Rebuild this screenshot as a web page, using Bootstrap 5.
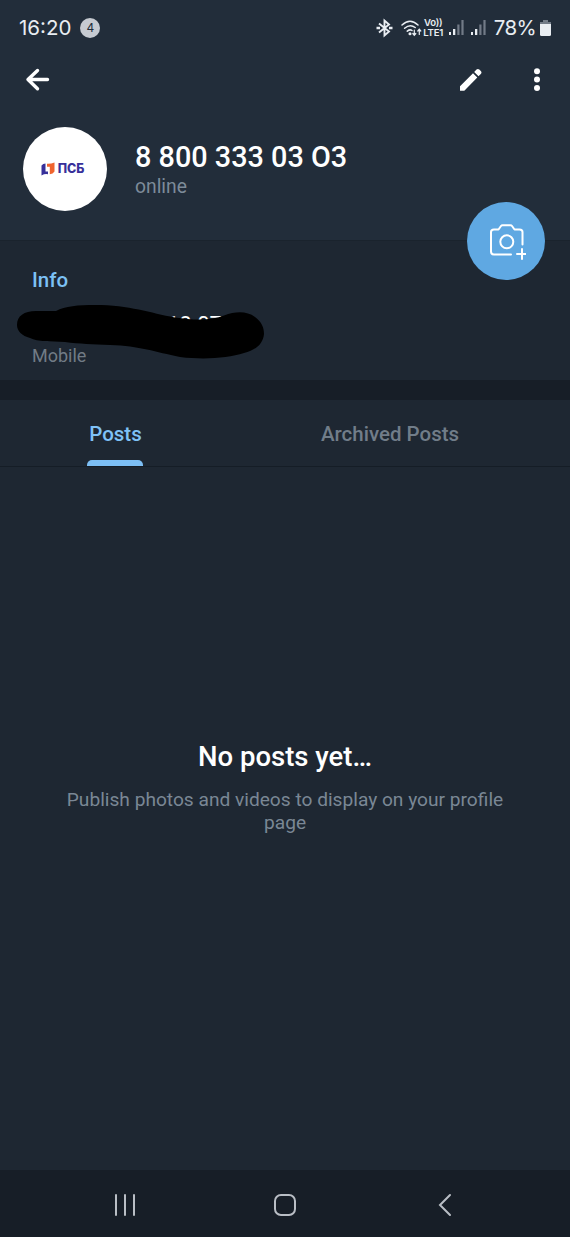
<!DOCTYPE html>
<html lang="en">
<head>
  <meta charset="UTF-8" />
  <meta name="viewport" content="width=device-width, initial-scale=1.0"/>
  <title>Profile</title>
  <link href="https://cdn.jsdelivr.net/npm/bootstrap@5.3.3/dist/css/bootstrap.min.css" rel="stylesheet"/>
  <style>
    body {
      background-color: #1e2732;
      color: #fff;
      font-family: Roboto, sans-serif;
      height: 1237px;
      overflow: hidden;
    }

    svg {
      display: block;
      flex-shrink: 0;
    }

    .profile-header {
      background-color: #222d3a;
      height: 240px;
    }

    /* phone status bar */
    .status-bar {
      height: 54px;
      padding: 1px 19px 0 19px;
      font-family: Inter, sans-serif;
      color: #e9edf2;
    }

    .clock {
      font-size: 20.5px;
      line-height: 24px;
      padding-top: 1px;
    }

    .notif-count {
      width: 20px;
      height: 20px;
      margin-left: 9px;
      font-size: 12px;
      background-color: #c6cad1;
      color: #222d3a;
    }

    .volte {
      font-size: 9.6px;
      font-weight: 600;
      line-height: 10px;
      letter-spacing: -0.2px;
      width: 21px;
      margin-left: 1px;
    }

    .battery-text {
      margin-left: 7px;
      font-size: 20.5px;
      line-height: 24px;
      letter-spacing: -0.6px;
      padding-top: 1px;
    }

    .battery-icon {
      margin-left: 4px;
    }

    .toolbar-row {
      height: 52px;
      padding: 0 29px 0 25px;
    }

    .menu-dots {
      margin-left: 51px;
    }

    .profile-row {
      padding: 21px 0 0 23px;
    }

    .avatar {
      width: 84px;
      height: 84px;
      padding-right: 5px;
      background-color: #fff;
    }

    .avatar-text {
      margin-left: 3px;
      font-family: Inter, sans-serif;
      font-size: 12.5px;
      font-weight: 800;
      color: #37309a;
    }

    .profile-text {
      padding: 14px 0 0 28px;
    }

    .profile-name {
      font-size: 28.8px;
      font-weight: 500;
      line-height: 32px;
    }

    .profile-status {
      margin-top: 2px;
      font-size: 19.3px;
      line-height: 24px;
      color: #7d8b99;
    }

    .photo-btn,
    .photo-btn:hover {
      top: 202px;
      right: 25px;
      width: 78px;
      height: 78px;
      background-color: #5fa8e2;
    }

    .info-section {
      height: 140px;
      padding: 27px 32px 0;
      border-top: 1px solid #1a232d;
    }

    .info-title {
      font-size: 20.5px;
      font-weight: 500;
      line-height: 24px;
      color: #7cc1f5;
    }

    .phone-number {
      margin-top: 18px;
      font-size: 22px;
      line-height: 30px;
      padding-left: 135px;
    }

    .phone-label {
      margin-top: 5px;
      font-size: 18px;
      line-height: 22px;
      color: #717b85;
    }

    /* marker stroke hiding the number */
    .scribble {
      left: 10px;
      top: 300px;
    }

    .divider {
      height: 20px;
      background-color: #171e27;
    }

    .post-tabs {
      height: 67px;
      border-bottom: 1px solid #151d26;
      font-size: 20.5px;
      font-weight: 500;
    }

    .post-tabs .nav-link {
      padding: 0;
      height: 66px;
      line-height: 68px;
      text-align: center;
      color: #717d89;
    }

    .post-tabs .nav-link.active {
      color: #7fc2f7;
    }

    .tab-posts {
      width: 231px;
    }

    .tab-archived {
      width: 318px;
    }

    .tab-line {
      width: 56px;
      height: 6px;
      left: 87px;
      bottom: 0;
      border-radius: 5px 5px 0 0;
      background-color: #7dbff5;
    }

    .empty-state {
      height: 703px;
      padding: 273px 60px 0;
    }

    .empty-title {
      font-size: 27.5px;
      font-weight: 500;
      line-height: 34px;
    }

    .empty-text {
      margin-top: 14px;
      font-size: 19.15px;
      line-height: 23px;
      color: #7a8795;
    }

    .nav-buttons {
      height: 67px;
      padding: 3px 117px 0 113px;
      background-color: #171e27;
    }

    .home-icon {
      margin-right: 5px;
    }
  </style>
</head>
<body>
  <header class="profile-header">
    <div class="status-bar d-flex align-items-center">
      <span class="clock">16:20</span>
      <span class="notif-count rounded-circle d-flex align-items-center justify-content-center">4</span>
      <div class="d-flex align-items-center ms-auto">
        <!-- bluetooth -->
        <svg width="17" height="20" viewBox="0 0 17 20" fill="none" stroke="#e9edf2" stroke-width="1.9">
          <path d="M3 5.500L13 13.500L8.500 17.500V2.500L13 6.500L3 14.500"/>
          <path d="M.5 10h3.500M13 10h3.500" stroke-width="2.400"/>
        </svg>
        <!-- wifi with traffic arrows -->
        <svg class="ms-2" width="21" height="20" viewBox="0 0 21 20" fill="none" stroke="#e9edf2" stroke-width="1.500" stroke-linecap="round">
          <path d="M1 7Q9 -.5 17 7M3.600 10.300Q9 5.500 14.200 9.500M6.300 13.200Q9 11 11 12.500"/>
          <circle cx="9" cy="15.800" r=".8" fill="#e9edf2"/>
          <path d="M13.300 12v5M11.800 15.500l1.500 1.800 1.500-1.800M18.300 16.500v-5M16.800 13l1.500-1.800 1.500 1.800" stroke-width="1.200"/>
        </svg>
        <div class="volte text-center"><div>Vo))</div><div>LTE1</div></div>
        <!-- two sim signals -->
        <svg class="ms-1" width="39" height="20" viewBox="0 0 39 20">
          <path fill="#e9edf2" d="M1 14h2v3H1zM5 11h2.300v6H5zM23 14h2v3h-2zM27 11h2.300v6H27z"/>
          <path fill="#727b87" d="M9.300 6.500h2.200V17H9.300zM13.400 2h2.200v15h-2.200zM31.300 6.500h2.200V17h-2.200zM35.400 2h2.200v15h-2.200z"/>
        </svg>
        <span class="battery-text">78%</span>
        <svg class="battery-icon" width="11" height="18" viewBox="0 0 11 18">
          <path fill="#727b87" d="M3 1h5v2h3v3H0V3h3z"/>
          <path fill="#e9edf2" d="M0 5h11v10.500a1.500 1.500 0 0 1-1.500 1.500h-8A1.500 1.500 0 0 1 0 15.500z"/>
        </svg>
      </div>
    </div>

    <div class="toolbar-row d-flex align-items-center">
      <svg width="25" height="24" viewBox="0 0 25 24" fill="none" stroke="#fff" stroke-width="3.400" stroke-linecap="round" stroke-linejoin="round">
        <path d="M22.500 11.500H3M12.500 2.500L3 11.500l9.500 9.200"/>
      </svg>
      <svg class="ms-auto" width="22" height="24" viewBox="0 0 22 24" fill="#fff">
        <path d="M0 18.200L13 5.200l4.300 4.300L4.300 22.700H0zM14.200 3.900l2.300-2.300a2 2 0 0 1 2.800 0l1.500 1.500a2 2 0 0 1 0 2.800l-2.300 2.300z"/>
      </svg>
      <svg class="menu-dots" width="8" height="24" viewBox="0 0 8 24" fill="#fff">
        <circle cx="4" cy="3.300" r="3"/><circle cx="4" cy="11.600" r="3"/><circle cx="4" cy="20" r="3"/>
      </svg>
    </div>

    <div class="profile-row d-flex">
      <div class="avatar rounded-circle d-flex align-items-center justify-content-center">
        <svg width="14" height="14" viewBox="0 0 14 14">
          <path fill="#37309a" d="M.5 3.500Q2 1.500 4.500 1.500V9.500L7 9.500V12.300Q4 11.500.5 13.500z"/>
          <path fill="#f0642d" d="M6 1.800Q10 2 13.500.5V9.500Q12 12 8.800 12.300V4.800H6z"/>
        </svg>
        <span class="avatar-text">ПСБ</span>
      </div>
      <div class="profile-text">
        <div class="profile-name">8 800 333 03 O3</div>
        <div class="profile-status">online</div>
      </div>
    </div>
  </header>

  <button class="photo-btn btn border-0 rounded-circle position-absolute d-flex align-items-center justify-content-center p-0" aria-label="Set photo">
    <svg width="40" height="38" viewBox="0 0 40 38" fill="none" stroke="#fff" stroke-width="2" stroke-linecap="round" stroke-linejoin="round">
      <path d="M25 32.500H8q-3 0-3-3V10q0-2.500 3-2.500h4.500L15 4q.6-.8 1.500-.8h8q.9 0 1.500.8l2.500 3.500H33.500q3 0 3 2.500V22.500"/>
      <circle cx="20.800" cy="19.800" r="6.500"/>
      <path d="M36 27v10M31 32h9.500"/>
    </svg>
  </button>

  <section class="info-section">
    <div class="info-title">Info</div>
    <div class="phone-number">18 07</div>
    <div class="phone-label">Mobile</div>
  </section>
  <svg class="scribble position-absolute" width="260" height="64" viewBox="10 300 260 64">
    <path d="M17 325C17 316 24 311 36 311H56C65 306 78 305 95 305C130 305 150 313 175 317.500C195 320.500 212 320.500 224 315.500C236 311 247 311 255 317C262 322 264 328 264 334C263 344 256 350 244 353C228 358 205 360 180 357C155 352 140 346 110 345C92 344 80 344 65 342C50 341 38 342 30 338C22 336 17 331 17 325Z"/>
  </svg>

  <div class="divider"></div>

  <nav class="post-tabs nav flex-nowrap position-relative">
    <a class="nav-link active tab-posts" href="#">Posts</a>
    <a class="nav-link tab-archived" href="#">Archived Posts</a>
    <span class="tab-line position-absolute"></span>
  </nav>

  <main class="empty-state text-center">
    <div class="empty-title">No posts yet…</div>
    <div class="empty-text">Publish photos and videos to display on your profile page</div>
  </main>

  <!-- system navigation -->
  <footer class="nav-buttons d-flex align-items-center justify-content-between">
    <svg width="24" height="24" viewBox="0 0 24 24" stroke="#b9bec5" stroke-width="2" stroke-linecap="round">
      <path d="M3 2v20M12 2v20M21 2v20"/>
    </svg>
    <svg class="home-icon" width="24" height="24" viewBox="0 0 24 24" fill="none" stroke="#b9bec5" stroke-width="2">
      <rect x="2" y="2" width="20" height="20" rx="6"/>
    </svg>
    <svg width="16" height="24" viewBox="0 0 16 24" fill="none" stroke="#b9bec5" stroke-width="2" stroke-linecap="round">
      <path d="M13 2L3 12l10 10"/>
    </svg>
  </footer>

  <script src="https://cdn.jsdelivr.net/npm/bootstrap@5.3.3/dist/js/bootstrap.bundle.min.js"></script>
</body>
</html>
